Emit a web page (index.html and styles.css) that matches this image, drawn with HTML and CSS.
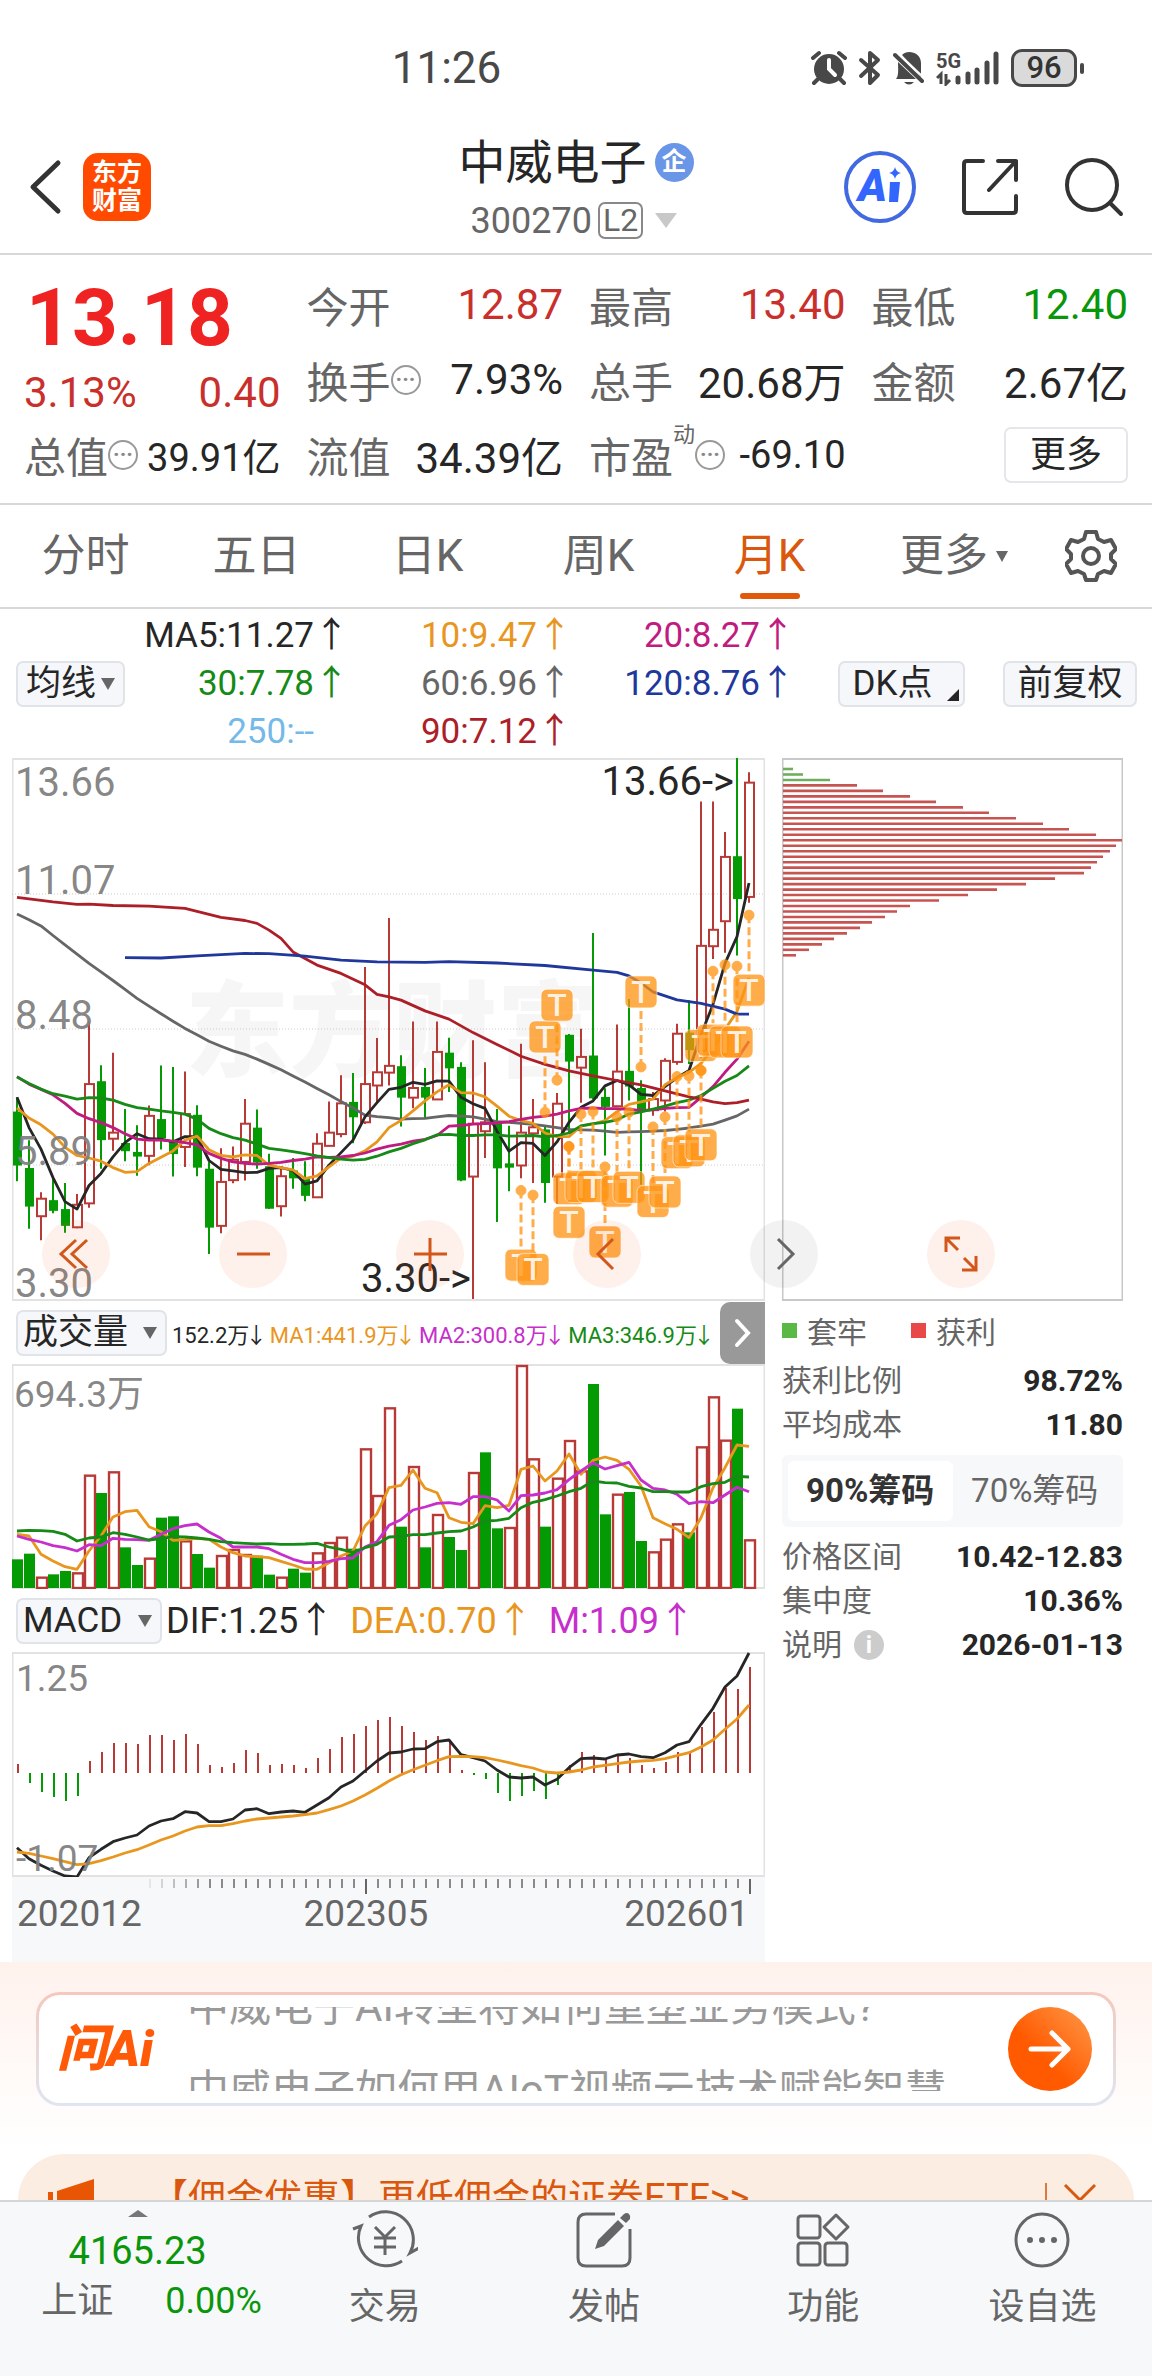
FILE: index.html
```html
<!DOCTYPE html>
<html lang="zh-CN">
<head>
    <meta charset="UTF-8">
    <meta name="viewport" content="width=device-width, initial-scale=1.0">
    <title>中威电子 300270</title>
    <link rel="stylesheet" href="styles.css">
</head>
<body>
<div class="app">

    <!-- 状态栏 -->
    <div class="status-bar">
        <span class="clock">11:26</span>
        <div class="status-icons">
            <svg width="36" height="36" viewBox="0 0 36 36">
                <circle cx="18" cy="19" r="15" fill="#484848"/>
                <path d="M2 8l6-5M34 8l-6-5M7 29l-4 4M29 29l4 4" stroke="#484848" stroke-width="4" stroke-linecap="round"/>
                <path d="M18 10v9l6 6" fill="none" stroke="#fff" stroke-width="4" stroke-linecap="round"/>
            </svg>
            <svg width="24" height="36" viewBox="0 0 24 36">
                <path d="M3 10l17 15-8 8V3l8 7L3 26" fill="none" stroke="#484848" stroke-width="4" stroke-linejoin="round" stroke-linecap="round"/>
            </svg>
            <svg width="32" height="36" viewBox="0 0 32 36">
                <path d="M5 12L23 29H3c3-3 2-11 2-17zM9 5c5-6 19-3 19 8v14z" fill="#484848"/>
                <path d="M2 5l27 26" stroke="#484848" stroke-width="4" stroke-linecap="round"/>
                <path d="M6 4l24 23" stroke="#fff" stroke-width="2"/>
                <path d="M11 32h10q-5 5-10 0z" fill="#484848"/>
            </svg>
            <svg width="64" height="36" viewBox="0 0 64 36">
                <text x="0" y="18" class="net">5G</text>
                <path d="M1 28l4-4v10M10 24v10l4-4" fill="none" stroke="#484848" stroke-width="3"/>
                <path d="M22 28v4M32 24v8M41 20v12M51 13v19M60 4v28" stroke="#484848" stroke-width="5" stroke-linecap="round"/>
            </svg>
            <span class="battery">96</span>
        </div>
    </div>

    <!-- 标题栏 -->
    <header class="top-bar">
        <div class="top-left">
            <button type="button" class="icon-btn" aria-label="返回">
                <svg width="34" height="56" viewBox="0 0 34 56"><path d="M30 4L5 28l25 24" fill="none" stroke="#333" stroke-width="5" stroke-linecap="round" stroke-linejoin="round"/></svg>
            </button>
            <a href="#" class="logo">东方<br>财富</a>
        </div>
        <div class="stock">
            <h1>中威电子<span class="qi">企</span></h1>
            <p>300270<span class="l2">L2</span><span class="tri-down big"></span></p>
        </div>
        <div class="top-right">
            <button type="button" class="icon-btn" aria-label="AI">
                <svg width="72" height="72" viewBox="0 0 72 72">
                    <circle cx="36" cy="36" r="34" fill="none" stroke="#4169e1" stroke-width="4"/>
                    <text x="14" y="50" class="ai-text">A</text>
                    <path d="M46 31h10l-2 20h-9z" fill="#3366ff"/>
                    <path d="M51 16q1 5 6 6-5 1-6 6-1-5-6-6 5-1 6-6z" fill="#3366ff"/>
                </svg>
            </button>
            <button type="button" class="icon-btn" aria-label="分享">
                <svg width="58" height="58" viewBox="0 0 58 58"><path d="M22 3H6q-3 0-3 3v46q0 3 3 3h46q3 0 3-3V38M37 3h18v19M55 3L28 32" fill="none" stroke="#333" stroke-width="4" stroke-linecap="round" stroke-linejoin="round"/></svg>
            </button>
            <button type="button" class="icon-btn" aria-label="搜索">
                <svg width="60" height="60" viewBox="0 0 60 60"><circle cx="28" cy="28" r="25" fill="none" stroke="#333" stroke-width="4"/><path d="M46 46l11 11" stroke="#333" stroke-width="4" stroke-linecap="round"/></svg>
            </button>
        </div>
    </header>

    <!-- 行情 -->
    <section class="quote">
        <div class="price-box up">
            <strong>13.18</strong>
            <div class="change"><span>3.13%</span><span>0.40</span></div>
        </div>
        <div class="item"><span>今开</span><b class="up">12.87</b></div>
        <div class="item"><span>最高</span><b class="up">13.40</b></div>
        <div class="item"><span>最低</span><b class="down">12.40</b></div>
        <div class="item"><span>换手<i class="dots">···</i></span><b>7.93%</b></div>
        <div class="item"><span>总手</span><b>20.68万</b></div>
        <div class="item"><span>金额</span><b>2.67亿</b></div>
        <div class="item small"><span>总值<i class="dots">···</i></span><b>39.91亿</b></div>
        <div class="item"><span>流值</span><b>34.39亿</b></div>
        <div class="item small"><span>市盈<sup>动</sup><i class="dots">···</i></span><b>-69.10</b></div>
        <div class="item end"><button type="button" class="more-btn">更多</button></div>
    </section>

    <!-- 周期 -->
    <nav class="tabs">
        <button type="button">分时</button>
        <button type="button">五日</button>
        <button type="button">日K</button>
        <button type="button">周K</button>
        <button type="button" class="active">月K</button>
        <button type="button" class="more">更多<span class="tri-down"></span></button>
        <button type="button" class="gear" aria-label="设置">
            <svg width="52" height="54" viewBox="0 0 52 54">
                <path d="M21 3h10l2 7 6 3 7-2 5 9-5 5v5l5 5-5 9-7-2-6 3-2 6H21l-2-6-6-3-7 2-5-9 5-5v-5l-5-5 5-9 7 2 6-3z" fill="none" stroke="#555" stroke-width="4" stroke-linejoin="round"/>
                <circle cx="26" cy="27" r="8" fill="none" stroke="#555" stroke-width="4"/>
            </svg>
        </button>
    </nav>

    <!-- 均线 -->
    <section class="ma-bar">
        <span class="picker">
            <select aria-label="主图指标"><option>均线</option></select>
        </span>
        <div class="ma-grid">
            <span class="c-black">MA5:11.27<i>↑</i></span>
            <span class="c-orange">10:9.47<i>↑</i></span>
            <span class="c-pink">20:8.27<i>↑</i></span>
            <span class="c-green">30:7.78<i>↑</i></span>
            <span class="c-gray">60:6.96<i>↑</i></span>
            <span class="c-blue">120:8.76<i>↑</i></span>
            <span class="c-sky">250:--<i></i></span>
            <span class="c-red">90:7.12<i>↑</i></span>
        </div>
        <button type="button" class="tool-btn dk">DK点<span class="corner"></span></button>
        <button type="button" class="tool-btn">前复权</button>
    </section>

    <!-- 图表 -->
    <section class="charts">
        <div class="main-col">
            <svg class="chart" id="kline" viewBox="0 0 753 543"></svg>

            <div class="ind-row">
                <span class="picker wide">
                    <select aria-label="副图指标一"><option>成交量</option></select>
                </span>
                <div class="vol-values">
                    <span class="c-black">152.2万<i>↓</i></span>
                    <span class="c-orange">MA1:441.9万<i>↓</i></span>
                    <span class="c-purple">MA2:300.8万<i>↓</i></span>
                    <span class="c-green">MA3:346.9万<i>↓</i></span>
                </div>
                <button type="button" class="next" aria-label="下一个">
                    <svg width="18" height="30" viewBox="0 0 18 30"><path d="M3 3l11 12L3 27" fill="none" stroke="#fff" stroke-width="4" stroke-linecap="round"/></svg>
                </button>
            </div>
            <svg class="chart" id="volume" viewBox="0 0 753 225"></svg>

            <div class="ind-row">
                <span class="picker wide macd">
                    <select aria-label="副图指标二"><option>MACD</option></select>
                </span>
                <div class="macd-values">
                    <span class="c-black">DIF:1.25<i>↑</i></span>
                    <span class="c-orange">DEA:0.70<i>↑</i></span>
                    <span class="c-purple">M:1.09<i>↑</i></span>
                </div>
            </div>
            <svg class="chart" id="macd" viewBox="0 0 753 225"></svg>

            <div class="axis">
                <svg class="chart" id="ticks" viewBox="0 0 753 18"></svg>
                <div class="dates"><span>202012</span><span>202305</span><span>202601</span></div>
            </div>
        </div>

        <aside class="chip-col">
            <svg class="chart" id="chips" viewBox="0 0 341 543"></svg>
            <div class="legend">
                <span class="lost">套牢</span>
                <span class="gain">获利</span>
            </div>
            <div class="chip-row"><span>获利比例</span><b>98.72%</b></div>
            <div class="chip-row"><span>平均成本</span><b>11.80</b></div>
            <div class="segment">
                <button type="button" class="on">90%筹码</button>
                <button type="button">70%筹码</button>
            </div>
            <div class="chip-row"><span>价格区间</span><b>10.42-12.83</b></div>
            <div class="chip-row"><span>集中度</span><b>10.36%</b></div>
            <div class="chip-row"><span>说明<i class="info">i</i></span><b>2026-01-13</b></div>
        </aside>

        <div class="float-tools">
            <button type="button" aria-label="最早"><svg viewBox="0 0 68 68"><path d="M34 20L19 34l15 14M45 20L30 34l15 14"/></svg></button>
            <button type="button" aria-label="缩小"><svg viewBox="0 0 68 68"><path d="M18 34h33"/></svg></button>
            <button type="button" aria-label="放大"><svg viewBox="0 0 68 68"><path d="M18 34h33M34 18v33"/></svg></button>
            <button type="button" aria-label="向左"><svg viewBox="0 0 68 68"><path d="M40 19L25 34l15 15"/></svg></button>
            <button type="button" aria-label="向右" class="off"><svg viewBox="0 0 68 68"><path d="M28 19l15 15-15 15"/></svg></button>
            <button type="button" aria-label="全屏"><svg viewBox="0 0 68 68"><path d="M31 30L19 18M19 32V18h14M37 38l12 12M49 36v14H35"/></svg></button>
        </div>
    </section>

    <!-- 问AI -->
    <section class="ask">
        <div class="ask-card">
            <span class="ask-logo">问Ai</span>
            <div class="ask-list">
                <p>中威电子AI转型将如何重塑业务模式?</p>
                <p>中威电子如何用AIoT视频云技术赋能智慧</p>
            </div>
            <button type="button" class="ask-go" aria-label="提问">
                <svg width="44" height="40" viewBox="0 0 44 40"><path d="M3 20h37M24 4l16 16-16 16" fill="none" stroke="#fff" stroke-width="5" stroke-linecap="round" stroke-linejoin="round"/></svg>
            </button>
        </div>
    </section>

    <div class="promo">
        <svg width="48" height="44" viewBox="0 0 48 44"><path d="M0 14h5v20H0zM9 13L46 1v42L9 33z" fill="#e85504"/></svg>
        <a href="#">【佣金优惠】更低佣金的证券ETF&gt;&gt;</a>
        <button type="button" class="close" aria-label="关闭">
            <svg width="34" height="34" viewBox="0 0 34 34"><path d="M2 2l30 30M32 2L2 32" stroke="#d9580e" stroke-width="3"/></svg>
        </button>
    </div>

    <!-- 底部 -->
    <nav class="bottom-bar">
        <a href="#" class="index">
            <span class="tri-up"></span>
            <span class="down point">4165.23</span>
            <span class="index-row"><span>上证</span><span class="down">0.00%</span></span>
        </a>
        <a href="#">
            <svg width="66" height="60" viewBox="0 0 66 60">
                <path d="M17 7A28 28 0 0 1 58 43l9-5M50 51A28 28 0 0 1 9 16L1 19" fill="none" stroke="#666" stroke-width="3"/>
                <path d="M23 17l10 10 10-10M33 27v18M22 28h22M22 37h22" fill="none" stroke="#666" stroke-width="3"/>
            </svg>
            交易
        </a>
        <a href="#">
            <svg width="58" height="60" viewBox="0 0 58 60">
                <path d="M40 4H11q-8 0-8 8v36q0 8 8 8h36q8 0 8-8V19" fill="none" stroke="#666" stroke-width="3"/>
                <path d="M20 39l3-9 20-20 6 6-20 20zM45 8l4-4q3-2 5 0t1 5l-4 4z" fill="#666"/>
            </svg>
            发帖
        </a>
        <a href="#">
            <svg width="56" height="60" viewBox="0 0 56 60" fill="none" stroke="#666" stroke-width="3">
                <rect x="3" y="6" width="22" height="22" rx="3"/><rect x="3" y="33" width="22" height="22" rx="3"/>
                <rect x="30" y="33" width="22" height="22" rx="3"/><path d="M41 5l12 12-12 12-12-12z" stroke-linejoin="round"/>
            </svg>
            功能
        </a>
        <a href="#">
            <svg width="60" height="60" viewBox="0 0 60 60">
                <circle cx="30" cy="30" r="26" fill="none" stroke="#666" stroke-width="3"/>
                <circle cx="18" cy="30" r="3" fill="#666"/><circle cx="30" cy="30" r="3" fill="#666"/><circle cx="42" cy="30" r="3" fill="#666"/>
            </svg>
            设自选
        </a>
    </nav>
</div>
<script src="chart.js"></script>
</body>
</html>
```

FILE: styles.css
```css
:root {
    --up: #c9302c;
    --down: #0a960a;
    --text: #262626;
    --label: #666;
    --orange: #e8961e;
    --line: #d8d8d8;
    --pale: #f5f7fa;
}

*, *::before, *::after {
    box-sizing: border-box;
    margin: 0;
    padding: 0;
}

body {
    font-family: Roboto, "Noto Sans CJK SC", sans-serif;
    color: var(--text);
    background: #fff;
}

button, select {
    font: inherit;
    color: inherit;
    border: none;
    background: none;
    cursor: pointer;
}

a {
    color: inherit;
    text-decoration: none;
}

svg {
    display: block;
    flex: none;
}

i {
    font-style: normal;
}

.app {
    display: flex;
    flex-direction: column;
    height: 100vh;
    overflow: hidden;
}

.app > * {
    flex: none;
}

.up { color: var(--up); }
.down { color: var(--down); }
.c-black { color: #262626; }
.c-orange { color: var(--orange); }
.c-pink { color: #bf1b80; }
.c-green { color: #168a16; }
.c-gray { color: #666; }
.c-blue { color: #20379b; }
.c-sky { color: #74b9e8; }
.c-red { color: #ac1f28; }
.c-purple { color: #c62fcb; }

.tri-down {
    display: inline-block;
    border: 6px solid transparent;
    border-top: 11px solid #666;
    border-bottom: 0;
}

.tri-down.big {
    border-width: 15px 11px 0;
    border-top-color: #c8c8c8;
}

.tri-up {
    border: 10px solid transparent;
    border-bottom: 7px solid #777;
    border-top: 0;
}

/* 状态栏 */
.status-bar {
    display: flex;
    justify-content: space-between;
    align-items: center;
    height: 120px;
    padding: 16px 67px 0 34%;
}

.clock {
    font-size: 44px;
    color: #484848;
}

.status-icons {
    display: flex;
    align-items: center;
    gap: 11px;
}

.net {
    font-size: 20px;
    font-weight: 700;
    fill: #484848;
}

.battery {
    position: relative;
    width: 66px;
    margin-right: 8px;
    border: 3px solid #484848;
    border-radius: 11px;
    background: #dadada;
    color: #333;
    font-size: 31px;
    font-weight: 500;
    line-height: 32px;
    text-align: center;
}

.battery::after {
    content: "";
    position: absolute;
    right: -10px;
    top: 11px;
    width: 4px;
    height: 11px;
    border-radius: 2px;
    background: #484848;
}

/* 标题栏 */
.top-bar {
    display: grid;
    grid-template-columns: 1fr auto 1fr;
    align-items: center;
    height: 135px;
    padding: 0 28px;
    border-bottom: 2px solid var(--line);
}

.top-left, .top-right {
    display: flex;
    align-items: center;
}

.top-left {
    gap: 21px;
}

.top-right {
    justify-content: flex-end;
    gap: 45px;
}

.logo {
    width: 68px;
    height: 68px;
    padding-top: 6px;
    border-radius: 15px;
    background: #ff4a00;
    color: #fff;
    font-size: 25px;
    font-weight: 700;
    line-height: 28px;
    text-align: center;
}

.stock {
    padding-top: 8px;
}

.stock h1 {
    display: flex;
    align-items: center;
    font-size: 47px;
    font-weight: 400;
    line-height: 60px;
}

.qi {
    width: 39px;
    height: 39px;
    margin-left: 8px;
    border-radius: 50%;
    background: #6a96e8;
    color: #fff;
    font-size: 25px;
    font-weight: 700;
    line-height: 37px;
    text-align: center;
}

.stock p {
    display: flex;
    align-items: center;
    padding-left: 12px;
    font-size: 36px;
    line-height: 56px;
    color: var(--label);
}

.l2 {
    margin: 0 12px 0 6px;
    padding: 0 3px;
    border: 2px solid #888;
    border-radius: 7px;
    font-size: 32px;
    line-height: 33px;
}

.ai-text {
    font-size: 44px;
    font-weight: 900;
    font-style: italic;
    fill: #3366ff;
}

/* 行情 */
.quote {
    display: grid;
    grid-template-columns: repeat(4, 1fr);
    grid-auto-rows: 75px;
    column-gap: 26px;
    padding: 12px 24px 11px;
    border-bottom: 2px solid var(--line);
}

.price-box {
    grid-row: span 2;
    padding-top: 6px;
}

.price-box strong {
    display: block;
    padding-left: 2px;
    color: #f02323;
    font-size: 80px;
    line-height: 90px;
}

.change {
    display: flex;
    justify-content: space-between;
    font-size: 42px;
    line-height: 60px;
}

.item {
    display: flex;
    align-items: center;
    justify-content: space-between;
    font-size: 42px;
    white-space: nowrap;
}

.item b {
    font-weight: 400;
}

.item.small b {
    font-size: 38px;
}

.item > span {
    display: flex;
    align-items: center;
    color: var(--label);
}

.item sup {
    align-self: flex-start;
    font-size: 22px;
    line-height: 22px;
}

.dots {
    width: 30px;
    height: 30px;
    border: 2px solid #999;
    border-radius: 50%;
    color: #888;
    font-size: 22px;
    font-weight: 700;
    line-height: 25px;
    text-align: center;
}

.item.end {
    justify-content: flex-end;
}

.more-btn {
    width: 124px;
    height: 56px;
    border: 2px solid #e4e6e9;
    border-radius: 7px;
    font-size: 36px;
    line-height: 48px;
}

/* 周期 */
.tabs {
    display: flex;
    height: 104px;
    padding-right: 24px;
    border-bottom: 2px solid var(--line);
    font-size: 44px;
    color: var(--label);
}

.tabs button {
    position: relative;
    flex: 171;
    line-height: 98px;
}

.tabs .more {
    display: flex;
    flex: 198;
    align-items: center;
    justify-content: center;
    gap: 8px;
}

.tabs .gear {
    display: flex;
    flex: 75;
    align-items: center;
    justify-content: center;
}

.tabs .active {
    color: #d9580e;
}

.tabs .active::after {
    content: "";
    position: absolute;
    left: 50%;
    bottom: 8px;
    width: 60px;
    height: 6px;
    margin-left: -30px;
    border-radius: 3px;
    background: #e0590b;
}

/* 均线 */
.ma-bar {
    display: flex;
    align-items: center;
    height: 149px;
    padding: 0 15px 0 16px;
}

.picker {
    position: relative;
    flex: none;
    width: 109px;
}

.picker.wide {
    width: 151px;
}

.picker.macd {
    width: 146px;
}

.picker select {
    display: block;
    width: 100%;
    height: 46px;
    padding-left: 8px;
    border: 2px solid #e0e3e8;
    border-radius: 7px;
    background: var(--pale);
    font-size: 35px;
    line-height: 42px;
    appearance: none;
}

.picker.wide select {
    padding-left: 5px;
}

.picker::after {
    content: "";
    position: absolute;
    right: 10px;
    top: 17px;
    border: 7px solid transparent;
    border-top: 12px solid #666;
    border-bottom: 0;
    pointer-events: none;
}

.ma-grid {
    display: grid;
    flex: 1;
    grid-template-columns: repeat(3, 1fr);
    grid-auto-rows: 48px;
    margin-right: 44px;
    font-size: 35px;
    line-height: 48px;
    text-align: right;
}

.ma-grid i {
    display: inline-block;
    width: 34px;
    text-align: center;
}

.tool-btn {
    position: relative;
    flex: none;
    width: 134px;
    height: 46px;
    border: 2px solid #e0e3e8;
    border-radius: 7px;
    background: var(--pale);
    font-size: 35px;
    line-height: 40px;
}

.tool-btn.dk {
    width: 127px;
    margin-right: 38px;
    padding-right: 18px;
}

.corner {
    position: absolute;
    right: 4px;
    bottom: 4px;
    border-left: 12px solid transparent;
    border-bottom: 12px solid #262626;
}

/* 图表 */
.charts {
    position: relative;
    display: grid;
    grid-template-columns: 753fr 341fr;
    column-gap: 17px;
    padding: 0 29px 0 12px;
}

.chart {
    width: 100%;
    height: auto;
    font-size: 40px;
}

.axis-label { fill: #808080; fill-opacity: 0.95; }
.mark-label { fill: #262626; }
.t-label { fill: #fff; fill-opacity: 0.85; font-size: 32px; font-weight: 500; text-anchor: middle; }
.watermark { fill: #f6f6f6; font-size: 104px; font-weight: 900; }
.vol-label { font-size: 37px; }

.ind-row {
    display: flex;
    align-items: center;
    height: 63px;
    padding-left: 4px;
}

.vol-values {
    display: flex;
    flex: 1;
    justify-content: space-between;
    padding: 0 8px 0 5px;
    font-size: 22px;
    white-space: nowrap;
}

.vol-values i {
    display: inline-block;
    width: 15px;
    text-indent: -4px;
}

.macd-values {
    display: flex;
    gap: 20px;
    padding-left: 4px;
    font-size: 36px;
    line-height: 46px;
}

.macd-values i {
    display: inline-block;
    width: 32px;
}

.next {
    display: flex;
    align-items: center;
    justify-content: center;
    width: 45px;
    height: 62px;
    border-radius: 10px 0 0 10px;
    background: #999;
}

.axis {
    height: 85px;
    background: #f7f8fa;
}

.dates {
    display: grid;
    grid-template-columns: 286fr 320fr auto;
    padding: 0 16px 0 5px;
    color: var(--label);
    font-size: 37px;
    line-height: 38px;
}

/* 筹码 */
.legend {
    display: flex;
    gap: 44px;
    height: 58px;
    align-items: center;
    color: var(--label);
    font-size: 30px;
}

.legend span {
    display: flex;
    align-items: center;
    gap: 10px;
}

.legend span::before {
    content: "";
    width: 15px;
    height: 15px;
    background: #5ab944;
}

.legend .gain::before {
    background: #e84848;
}

.chip-row {
    display: flex;
    justify-content: space-between;
    font-size: 30px;
    line-height: 44px;
}

.chip-row span {
    display: flex;
    align-items: center;
    color: var(--label);
}

.info {
    width: 30px;
    height: 30px;
    margin-left: 12px;
    border-radius: 50%;
    background: #ccc;
    color: #fff;
    font-size: 24px;
    font-weight: 700;
    line-height: 30px;
    text-align: center;
}

.segment {
    display: grid;
    grid-template-columns: 1fr 1fr;
    height: 72px;
    margin: 8px 0;
    padding: 6px;
    border-radius: 6px;
    background: #f7f8fa;
    color: var(--label);
    font-size: 33px;
}

.segment button {
    line-height: 56px;
}

.segment .on {
    border-radius: 6px;
    background: #fff;
    color: #333;
    font-weight: 700;
}

/* 浮动按钮 */
.float-tools {
    position: absolute;
    left: 42px;
    top: 462px;
    display: flex;
    gap: 109px;
}

.float-tools button {
    width: 68px;
    height: 68px;
    border-radius: 50%;
    background: rgba(240, 90, 20, 0.09);
}

.float-tools path {
    fill: none;
    stroke: #d2571b;
    stroke-width: 3;
}

.float-tools .off {
    background: rgba(0, 0, 0, 0.05);
}

.float-tools .off path {
    stroke: #666;
}

/* 问AI */
.ask {
    padding: 30px 36px 48px;
    background: linear-gradient(#fff2ed, #fff);
}

.ask-card {
    display: flex;
    align-items: center;
    height: 114px;
    padding: 0 21px 0 18px;
    border: 3px solid transparent;
    border-radius: 24px;
    background: linear-gradient(#fff, #fff) padding-box, linear-gradient(#f5c8bd, #dfe5f2) border-box;
}

.ask-logo {
    flex: none;
    width: 130px;
    color: #ff5a08;
    font-size: 50px;
    line-height: 60px;
    font-style: italic;
    font-weight: 900;
}

.ask-list {
    flex: 1;
    height: 84px;
    overflow: hidden;
    color: #999;
    font-size: 42px;
    line-height: 84px;
    white-space: nowrap;
}

.ask-list p:first-child {
    margin-top: -42px;
}

.ask-go {
    display: flex;
    align-items: center;
    justify-content: center;
    width: 84px;
    height: 84px;
    border-radius: 50%;
    background: linear-gradient(45deg, #ff5a00 40%, #ff9a4a);
}

.promo {
    display: flex;
    align-items: center;
    height: 92px;
    margin: 0 18px;
    padding: 0 37px 0 30px;
    border-radius: 46px;
    background: #fcede3;
    color: #d9580e;
    font-size: 38px;
    line-height: 88px;
}

.promo a {
    flex: 1;
    padding-left: 54px;
    margin-bottom: 4px;
}

.promo .close {
    padding-left: 16px;
    border-left: 2px solid #e0773c;
}

/* 底部 */
.bottom-bar {
    position: fixed;
    left: 0;
    right: 0;
    bottom: 0;
    display: grid;
    grid-template-columns: 275fr repeat(4, 219fr);
    height: 176px;
    border-top: 2px solid #d3d6d9;
    background: #f6f8fa;
    color: var(--label);
    font-size: 36px;
}

.bottom-bar a {
    display: flex;
    flex-direction: column;
    align-items: center;
    padding-top: 8px;
    line-height: 74px;
}

.bottom-bar .index {
    line-height: 50px;
}

.point {
    margin-top: 9px;
    font-size: 38px;
}

.index-row {
    display: flex;
    gap: 52px;
    padding-left: 28px;
}
```

FILE: chart.js
```js
const STEP = 12;
const LEFT = 5;
const RED = '#b83a37';
const GREEN = '#049a04';
const x = i => LEFT + i * STEP;

// 图上坐标换算
const ky = v => (v - 25) / 2.8;
const vy = v => (v - 222) / 3 + 1;
const my = v => (v - 186) / 3 + 1;

// [方向, 最高, 实体上沿, 实体下沿, 最低]
const candles = [
    [0,975,1015,1166,1210],[0,1095,1173,1281,1343],[1,1241,1259,1308,1375],[0,1200,1263,1293,1300],
    [0,1215,1288,1335,1354],[1,1246,1276,1339,1342],[1,760,938,1272,1284],[0,885,930,1095,1175],
    [1,850,1074,1091,1125],[0,1008,1103,1126,1154],[0,1053,1128,1141,1195],[1,998,1027,1139,1165],
    [0,886,1036,1090,1121],[0,890,1096,1134,1197],[1,903,1022,1114,1170],[0,997,1024,1172,1196],
    [0,1155,1175,1340,1414],[1,1118,1212,1335,1356],[1,1113,1150,1207,1216],[1,980,1049,1156,1208],
    [0,1009,1060,1158,1175],[0,1133,1168,1287,1287],[1,1170,1196,1280,1309],[0,1145,1180,1202,1231],
    [0,1154,1203,1251,1266],[1,1076,1105,1255,1255],[1,987,1074,1111,1111],[1,913,992,1078,1087],
    [0,907,988,1031,1104],[1,610,938,1045,1050],[1,809,905,942,990],[1,473,887,906,942],
    [0,857,888,976,1057],[1,763,949,976,1006],[0,893,946,976,1035],[1,763,848,981,981],
    [0,808,850,894,960],[0,877,890,1208,1210],[1,815,1049,1197,1540],[1,877,1045,1070,1145],
    [0,1008,1045,1174,1324],[0,1055,1160,1172,1238],[1,825,1074,1166,1202],[1,980,1059,1076,1215],
    [0,1058,1065,1215,1270],[1,963,993,1197,1274],[0,798,800,875,1075],[1,783,862,892,990],
    [0,515,858,978,980],[0,950,974,1002,1138],[1,771,903,1000,1000],[0,700,901,945,984],
    [0,927,949,1010,1220],[1,960,980,1011,1027],[1,866,873,984,1015],[1,769,797,876,884],
    [0,703,794,843,882],[1,147,551,845,865],[1,147,506,552,588],[1,232,302,482,570],
    [0,25,300,420,578],[1,65,94,414,430]
];

const klineMa = [
    ['#666', [462,478,495,522,548,574,600,624,648,673,698,720,741,762,782,800,818,832,845,855,868,883,898,915,932,950,968,987,1005,1025,1029,1032,1036,1035,1034,1030,1026,1028,1030,1036,1043,1045,1048,1051,1055,1060,1065,1066,1067,1070,1073,1072,1071,1070,1068,1065,1061,1056,1050,1039,1027,1008]],
    ['#262626', [975,1060,1120,1200,1267,1288,1222,1188,1142,1102,1077,1091,1092,1100,1085,1085,1152,1177,1181,1186,1185,1174,1172,1180,1218,1209,1165,1130,1095,1030,990,953,947,933,939,929,930,975,993,1006,1070,1126,1102,1104,1138,1100,1045,1003,985,943,928,940,967,970,945,920,900,800,715,600,525,375]],
    ['#e8961e', [1005,1033,1052,1078,1115,1138,1145,1154,1172,1185,1183,1160,1143,1125,1095,1084,1122,1138,1142,1136,1138,1165,1172,1178,1203,1195,1170,1145,1140,1125,1100,1060,1040,1013,985,960,940,962,963,974,1000,1028,1040,1048,1075,1085,1085,1055,1050,1040,1015,995,988,980,940,920,905,880,840,785,735,640]],
    ['#bf1b80', [917,938,953,968,992,1020,1035,1046,1060,1077,1092,1095,1095,1098,1102,1108,1132,1146,1156,1160,1162,1160,1157,1152,1148,1142,1143,1142,1138,1131,1120,1112,1106,1098,1093,1082,1056,1054,1050,1049,1047,1043,1037,1031,1028,1022,1013,1006,1005,1007,1007,1009,1012,1010,1006,1004,1003,975,945,905,868,818]],
    ['#168a16', [918,936,952,965,972,980,976,977,983,995,1004,1008,1013,1017,1022,1036,1062,1077,1088,1095,1106,1118,1122,1127,1133,1139,1144,1148,1151,1149,1140,1128,1118,1105,1094,1080,1079,1082,1082,1080,1080,1084,1083,1082,1086,1082,1075,1055,1049,1045,1038,1022,1016,1008,1000,990,983,970,950,930,914,887]]
];
const ma90 = [[0,415],[3,428],[5,435],[6,434],[8,438],[11,440],[14,446],[17,471],[19,480],[20,488],[21,507],[22,530],[23,568],[25,605],[27,628],[29,660],[30,687],[31,694],[32,703],[34,733],[36,756],[38,794],[40,827],[42,860],[44,883],[46,901],[48,915],[50,928],[52,940],[54,957],[56,974],[57,980],[58,988],[59,993],[60,990],[61,983]];
const ma120 = [[9,584],[12,585],[15,579],[19,572],[21,573],[24,580],[27,591],[30,596],[34,597],[36,595],[40,599],[44,606],[48,619],[50,625],[51,635],[52,655],[53,680],[55,702],[57,712],[59,728],[60,742],[61,742]];

// 做T标记 [序号, 圆点, 方块中心]
const marks = [
    [42,1236,1445],[43,1249,1457],[44,1017,806],[45,927,717],[46,1113,1325],[46,1113,1231],[47,1022,1225],[48,1015,1225],
    [49,1170,1380],[50,1030,1238],[51,1017,1227],[52,890,680],[53,1058,1267],[54,1030,1240],[55,917,1130],[56,915,1125],
    [57,900,1108],[57,900,830],[58,622,815],[59,604,820],[60,608,820],[61,465,675]
];

// 成交量，1为阳线
const volumes = [805,788,857,850,840,844,551,606,541,769,822,800,680,676,748,789,830,792,774,789,794,851,857,833,845,784,753,737,773,472,612,349,707,525,769,669,738,777,543,484,712,708,222,502,707,560,447,538,279,670,608,603,750,781,743,697,724,466,316,446,353,745];
const volumeUp = '00100110100100100111001001110111010100100111011100100111011101';
const volumeMa = [
    ['#e8961e', [730,735,790,810,827,835,780,735,678,662,658,707,722,748,746,742,745,768,785,795,797,800,811,822,834,835,815,795,780,705,668,590,583,537,592,605,680,694,698,644,650,643,535,525,570,540,489,550,508,498,508,535,585,680,698,715,740,680,590,530,462,466]],
    ['#c62fcb', [735,745,753,764,770,780,761,764,742,745,746,748,730,713,704,699,723,742,768,768,768,773,790,805,815,815,811,803,801,768,752,703,686,657,648,637,635,640,617,617,627,660,614,612,606,596,566,540,516,534,524,514,567,592,597,610,638,632,635,612,589,602]],
    ['#168a16', [720,718,719,721,730,750,741,738,725,730,738,747,743,737,738,741,745,752,755,757,759,758,760,760,759,757,768,775,784,770,760,738,736,731,731,726,722,720,708,690,688,682,650,634,626,615,602,592,570,575,576,586,591,602,602,603,603,587,578,574,556,558]]
];

const macdBars = [519,576,603,618,630,615,510,483,456,456,459,432,432,447,429,459,522,528,516,477,486,522,519,522,531,501,474,438,429,405,387,378,405,423,447,435,450,537,552,564,606,630,615,600,624,582,522,483,492,504,492,501,522,531,513,483,480,408,363,290,294,228];
const macdLines = [
    ['#262626', [770,803,823,840,855,858,800,775,752,741,732,705,690,683,662,666,692,692,684,657,653,668,663,660,664,642,620,588,570,540,510,486,483,474,473,452,447,491,500,510,537,558,561,558,582,565,530,503,501,504,492,489,497,500,485,462,452,400,352,288,255,186]],
    ['#e8961e', [783,787,795,803,812,821,818,809,798,786,776,762,747,735,720,708,704,704,698,690,684,681,678,675,671,666,656,645,630,612,592,570,551,536,523,509,497,496,497,500,507,515,524,531,543,546,543,537,528,523,518,513,510,508,503,494,485,468,447,415,384,342]]
];

const chipWidths = [10,20,47,74,100,127,153,180,206,233,260,286,313,339,333,327,320,314,308,301,272,243,214,185,156,127,114,102,89,77,64,51,39,26,13];

const line = (color, points, y) =>
    `<polyline points="${points.map(p => x(p[0]) + ',' + y(p[1]).toFixed(1)).join(' ')}" fill="none" stroke="${color}" stroke-width="2.8" stroke-linejoin="round"/>`;
const series = (list, y) => list.map(([c, vals]) => line(c, vals.map((v, i) => [i, v]), y)).join('');
const frame = (w, h, c) => `<rect x="0.5" y="1" width="${w - 1}" height="${h - 2}" fill="none" stroke="${c}" stroke-width="2"/>`;

function drawKline() {
    let s = '<text class="watermark" x="173" y="311">东方财富</text>' + frame(753, 543, '#e2e2e2');
    [136, 271, 407].forEach(y => {
        s += `<path d="M0 ${y}H753" stroke="#ccc" stroke-dasharray="1 2"/>`;
    });
    candles.forEach(([up, hi, top, bot, lo], i) => {
        const c = up ? RED : GREEN;
        const cx = x(i);
        const h = Math.max(ky(bot) - ky(top), 2);
        if (up) {
            s += `<path d="M${cx} ${ky(hi)}V${ky(top)}M${cx} ${ky(bot)}V${ky(lo)}" stroke="${c}" stroke-width="2"/>`;
            s += `<rect x="${cx - 4}" y="${ky(top)}" width="9" height="${h}" fill="none" stroke="${c}" stroke-width="2"/>`;
        } else {
            s += `<path d="M${cx} ${ky(hi)}V${ky(lo)}" stroke="${c}" stroke-width="2"/>`;
            s += `<rect x="${cx - 4}" y="${ky(top)}" width="9" height="${h}" fill="${c}"/>`;
        }
    });
    s += series(klineMa, ky) + line('#ac1f28', ma90, ky) + line('#20379b', ma120, ky);
    marks.forEach(([i, dot, box]) => {
        const cx = x(i);
        const by = ky(box);
        const edge = box > dot ? by - 17 : by + 17;
        s += `<g fill="#ff9412" stroke="#ff9412" opacity="0.76"><path d="M${cx} ${ky(dot)}V${edge}" stroke-width="3" stroke-dasharray="8 4"/>`;
        s += `<circle cx="${cx}" cy="${ky(dot)}" r="5"/><rect x="${cx - 16}" y="${by - 16}" width="32" height="32" rx="6" stroke="#fff" stroke-opacity="0.7"/></g>`;
        s += `<text class="t-label" x="${cx}" y="${by + 11}">T</text>`;
    });
    [['13.66', 38], ['11.07', 136], ['8.48', 271], ['5.89', 407], ['3.30', 539]].forEach(([t, y]) => {
        s += `<text class="axis-label" x="3" y="${y}">${t}</text>`;
    });
    s += '<text class="mark-label" x="722" y="37" text-anchor="end">13.66-&gt;</text>';
    s += '<text class="mark-label" x="459" y="534" text-anchor="end">3.30-&gt;</text>';
    document.getElementById('kline').innerHTML = s;
}

function drawVolume() {
    let s = frame(753, 225, '#e2e2e2');
    volumes.forEach((v, i) => {
        const y = vy(v);
        s += volumeUp[i] === '1'
            ? `<rect x="${x(i) - 4}" y="${y + 1}" width="10" height="${223 - y}" fill="#fff" stroke="${RED}" stroke-width="2.4"/>`
            : `<rect x="${x(i) - 5}" y="${y}" width="11" height="${224 - y}" fill="${GREEN}"/>`;
    });
    s += series(volumeMa, vy) + '<text class="axis-label vol-label" x="2" y="43">694.3万</text>';
    document.getElementById('volume').innerHTML = s;
}

function drawMacd() {
    let s = frame(753, 225, '#e2e2e2');
    macdBars.forEach((v, i) => {
        s += `<path d="M${x(i) + 1} ${my(546)}V${my(v)}" stroke="${v < 546 ? RED : GREEN}" stroke-width="2"/>`;
    });
    s += series(macdLines, my);
    s += '<text class="axis-label vol-label" x="4" y="39">1.25</text><text class="axis-label vol-label" x="4" y="219">-1.07</text>';
    document.getElementById('macd').innerHTML = s;
}

function drawTicks() {
    let s = '';
    for (let i = 11; i < 62; i++) {
        const long = i === 29 || i === 61;
        s += `<path d="M${x(i) + 1} 2V${long ? 17 : 11}" stroke="#666" stroke-width="${long ? 2 : 1.5}" opacity="${Math.min(1, (i - 10) / 6)}"/>`;
    }
    document.getElementById('ticks').innerHTML = s;
}

function drawChips() {
    let s = frame(341, 543, '#c8c8c8');
    chipWidths.forEach((w, i) => {
        s += `<path d="M1 ${(11 + i * 5.48).toFixed(1)}h${w}" stroke="${i < 3 ? '#6fae5c' : '#c65552'}" stroke-width="2.6"/>`;
    });
    document.getElementById('chips').innerHTML = s;
}

drawKline();
drawVolume();
drawMacd();
drawTicks();
drawChips();
```
